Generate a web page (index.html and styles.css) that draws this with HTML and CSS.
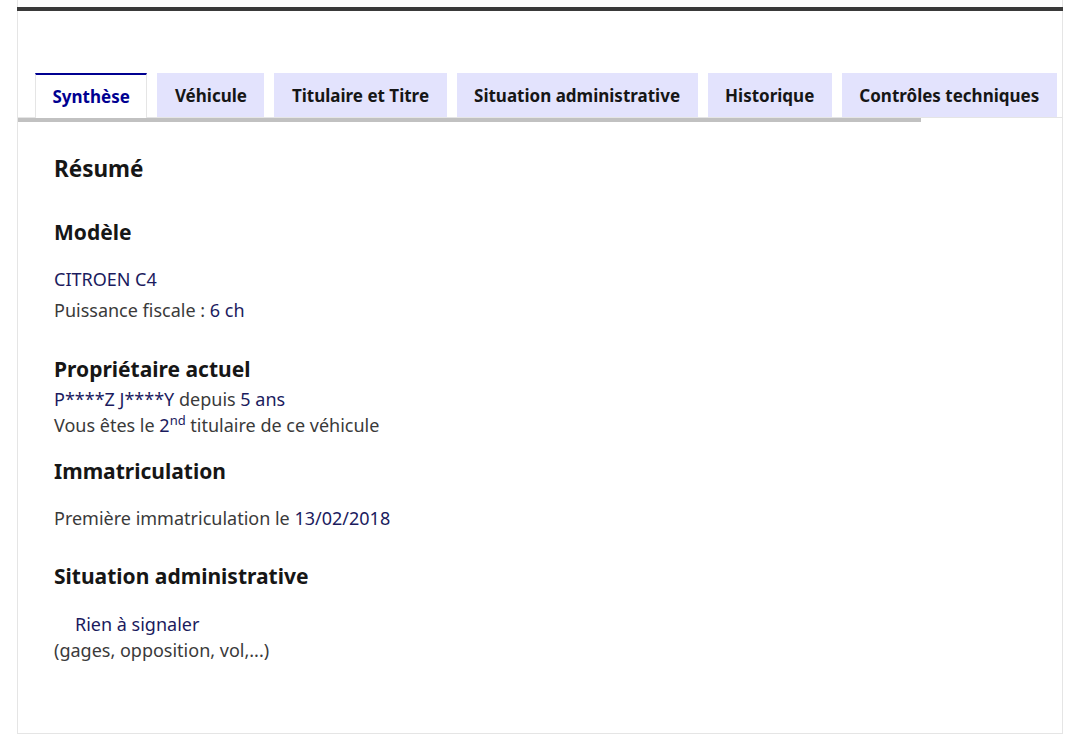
FILE: index.html
```html
<!DOCTYPE html>
<html lang="fr">
<head>
  <meta charset="UTF-8" />
  <meta name="viewport" content="width=device-width, initial-scale=1.0" />
  <title>Synthèse du véhicule</title>
  <link rel="stylesheet" href="styles.css">
</head>
<body>
  <div class="page">
    <div class="topbar"></div>

    <div class="tabs-wrap">
      <ul class="tabs">
        <li class="tab active">Synthèse</li>
        <li class="tab">Véhicule</li>
        <li class="tab">Titulaire et Titre</li>
        <li class="tab">Situation administrative</li>
        <li class="tab">Historique</li>
        <li class="tab">Contrôles techniques</li>
      </ul>
      <div class="scrollbar"></div>
    </div>

    <div class="panel">
      <h2 class="title">Résumé</h2>

      <h3 class="section model">Modèle</h3>
      <p class="value">CITROEN C4</p>
      <p class="line">Puissance fiscale : <span class="value">6 ch</span></p>

      <h3 class="section owner">Propriétaire actuel</h3>
      <p><span class="value">P****Z J****Y</span> depuis <span class="value">5 ans</span></p>
      <p>Vous êtes le <span class="value">2<sup>nd</sup></span> titulaire de ce véhicule</p>

      <h3 class="section immat">Immatriculation</h3>
      <p>Première immatriculation le <span class="value">13/02/2018</span></p>

      <h3 class="section admin">Situation administrative</h3>
      <p class="indent"><span class="value">Rien à signaler</span></p>
      <p>(gages, opposition, vol,...)</p>
    </div>
  </div>
</body>
</html>
```

FILE: styles.css
```css
body {
  margin: 0;
  font-family: "Noto Sans", "DejaVu Sans", sans-serif;
  color: #3a3a3a;
  background: #fff;
}
.page {
  margin: 0 17px;
  padding-top: 7px;
  border-left: 1px solid #e5e5e5;
  border-right: 1px solid #e5e5e5;
}
.topbar {
  height: 4px;
  background: #3a3a3a;
  margin: 0 -1px;
}
.tabs-wrap {
  position: relative;
  margin-top: 62px;
}
.tabs {
  list-style: none;
  margin: 0;
  padding: 0 0 0 17px;
  display: flex;
  gap: 10px;
}
.tab {
  height: 44px;
  display: flex;
  align-items: center;
  padding: 0 17.5px;
  background: #e3e3fd;
  color: #161616;
  font-weight: 700;
  font-size: 17px;
  white-space: nowrap;
}
.tab.active {
  background: #fff;
  color: #000091;
  border-top: 2px solid #000091;
  border-left: 1px solid #e5e5e5;
  border-right: 1px solid #e5e5e5;
  height: 43px;
  padding: 0 16.5px;
  position: relative;
  z-index: 1;
  margin-bottom: -1px;
}
.scrollbar {
  position: absolute;
  left: 0;
  bottom: -5px;
  width: 903px;
  height: 4px;
  background: #c1c1c1;
  z-index: 2;
}
.panel {
  margin: 0 -1px;
  border: 1px solid #e5e5e5;
  padding: 36px 36px 70px;
  font-size: 18px;
}
.title {
  margin: 0;
  font-size: 22.5px;
  line-height: 30px;
  color: #161616;
}
.section {
  margin: 0;
  font-size: 21px;
  line-height: 30px;
  color: #161616;
}
.section.model {
  margin: 33px 0 19px;
}
.section.owner {
  margin: 31px 0 2px;
}
.section.immat {
  margin: 18px 0 19px;
}
.section.admin {
  margin: 30px 0 20px;
}
p {
  margin: 0;
  line-height: 26px;
}
.line {
  margin-top: 5px;
}
.value {
  color: #1b1b5e;
}
sup {
  font-size: 13px;
  line-height: 0;
}
.indent {
  padding-left: 21px;
}
```
